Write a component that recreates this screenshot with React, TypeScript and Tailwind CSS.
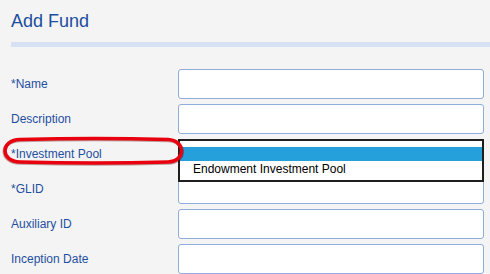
const fields = ['*Name', 'Description', '*Investment Pool', '*GLID', 'Auxiliary ID', 'Inception Date'];

export default function App() {
    return (
        <div className="relative h-[274px] w-[490px] overflow-hidden bg-[#f4f4f4] font-['Liberation_Sans',Arial,sans-serif]">
            {/* Header */}
            <div className="pl-[11px] pt-[11px]">
                <h1 className="text-[18px] leading-[21px] text-[#1c4d9e]">Add Fund</h1>
                <div className="mt-[10px] h-[5px] bg-[#d6e2f4]" />
            </div>

            {/* Form rows */}
            <div className="mt-[22px] flex flex-col gap-[5px] pl-[11px] pr-[6px]">
                {fields.map(label => (
                    <div key={label} className="flex h-[30px] items-center">
                        <label className="w-[167px] text-[12px] text-[#1f4f9f]">{label}</label>
                        <input
                            className="h-[30px] w-[306px] rounded-[3px] border border-[#8eacdc] bg-white outline-none"
                            aria-label={label}
                        />
                    </div>
                ))}
            </div>

            {/* Open select list */}
            <div className="absolute left-[178px] top-[139px] h-[43px] w-[306px] border-2 border-[#1e1e1e] bg-white pt-[6px]">
                <div className="h-[14px] bg-[#26a0da]" />
                <div className="pl-[13px] text-[12px] leading-[16px] text-black">Endowment Investment Pool</div>
            </div>

            {/* Red highlight ring */}
            <svg className="pointer-events-none absolute left-0 top-[136px]" width="190" height="30" viewBox="0 0 190 30">
                <path
                    d="M20 4.5 C60 3.5 130 3.5 168 4.5 C187 5.5 187 26.5 168 27 C130 28 60 28 20 27 C-1 26.5 -1 5 20 4.5 Z"
                    fill="none"
                    stroke="rgba(80,0,0,0.35)"
                    strokeWidth="3.5"
                />
                <path
                    d="M20 3.5 C60 2.5 130 2.5 168 3.5 C186 4.5 186 25.5 168 26 C130 27 60 27 20 26 C0 25.5 0 4 20 3.5 Z"
                    fill="none"
                    stroke="#e8000e"
                    strokeWidth="3.5"
                />
            </svg>
        </div>
    );
}
